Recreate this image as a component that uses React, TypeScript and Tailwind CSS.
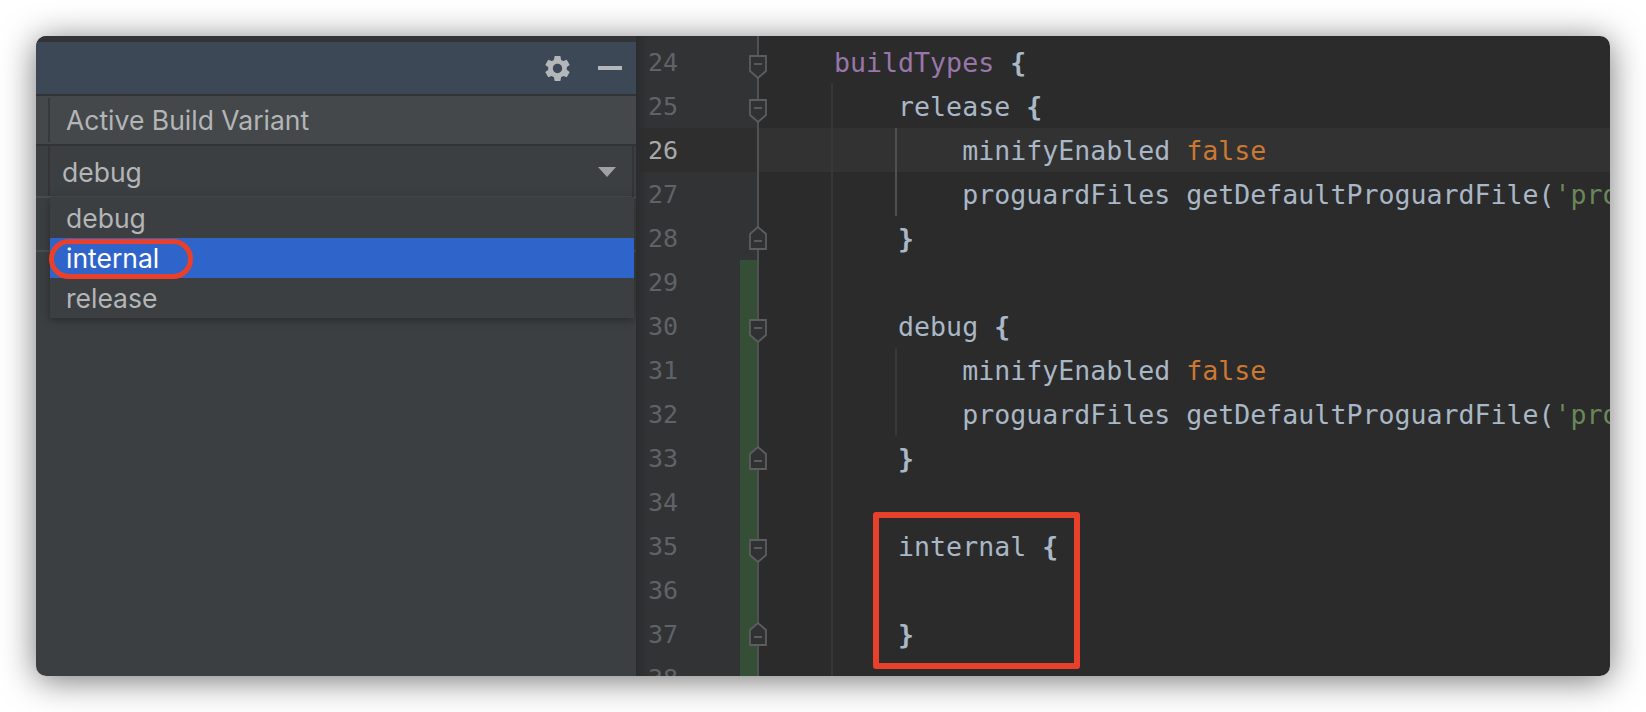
import { MdSettings } from "react-icons/md"

type Tok = { t: string; c?: string }

const purple = "text-[#9876aa]"
const orange = "text-[#cc7832]"
const green = "text-[#6a8759]"
const brace = "font-bold"

const proguard: Tok[] = [
  { t: "            proguardFiles getDefaultProguardFile(" },
  { t: "'proguard-android.txt'", c: green },
  { t: "), 'proguard-rules.pro'" },
]

const lines: { n: number; code: Tok[]; fold?: "open" | "close" }[] = [
  { n: 24, code: [{ t: "    " }, { t: "buildTypes", c: purple }, { t: " " }, { t: "{", c: brace }], fold: "open" },
  { n: 25, code: [{ t: "        release " }, { t: "{", c: brace }], fold: "open" },
  { n: 26, code: [{ t: "            minifyEnabled " }, { t: "false", c: orange }] },
  { n: 27, code: proguard },
  { n: 28, code: [{ t: "        " }, { t: "}", c: brace }], fold: "close" },
  { n: 29, code: [] },
  { n: 30, code: [{ t: "        debug " }, { t: "{", c: brace }], fold: "open" },
  { n: 31, code: [{ t: "            minifyEnabled " }, { t: "false", c: orange }] },
  { n: 32, code: proguard },
  { n: 33, code: [{ t: "        " }, { t: "}", c: brace }], fold: "close" },
  { n: 34, code: [] },
  { n: 35, code: [{ t: "        internal " }, { t: "{", c: brace }], fold: "open" },
  { n: 36, code: [] },
  { n: 37, code: [{ t: "        " }, { t: "}", c: brace }], fold: "close" },
  { n: 38, code: [] },
]

function FoldMarker({ kind }: { kind: "open" | "close" }) {
  if (kind === "open") {
    return (
      <svg className="absolute left-[113px] top-[15px] z-10" width="18" height="24" viewBox="0 0 18 24">
        <path d="M1 1H17V16L9 23L1 16Z" fill="#2f3133" stroke="#5c5d5e" strokeWidth="1.8" />
        <path d="M5 9H13" stroke="#666768" strokeWidth="1.6" />
      </svg>
    )
  }
  return (
    <svg className="absolute left-[113px] top-[10px] z-10" width="18" height="24" viewBox="0 0 18 24">
      <path d="M1 23H17V8L9 1L1 8Z" fill="#2f3133" stroke="#5c5d5e" strokeWidth="1.8" />
      <path d="M5 15H13" stroke="#666768" strokeWidth="1.6" />
    </svg>
  )
}

function CodeRow({ n, code, fold }: { n: number; code: Tok[]; fold?: "open" | "close" }) {
  const current = n === 26
  return (
    <div className={`relative flex h-[44px] shrink-0 ${current ? "bg-[#323232]" : ""}`}>
      <div
        className={`w-[104px] shrink-0 pl-[12px] pt-[1px] text-[25px] leading-[44px] ${
          current ? "bg-[#2f2e2e] text-[#a9a9a9]" : "bg-[#313335] text-[#606366]"
        }`}
      >
        {n}
      </div>
      <div className={`w-[18px] shrink-0 ${n >= 29 ? "bg-[#344f36]" : current ? "bg-[#2f2e2e]" : "bg-[#313335]"}`} />
      <div className="min-w-0 flex-1 overflow-hidden whitespace-pre pl-[12px] pt-[1px] text-[26.6px] leading-[44px] text-[#a9b7c6]">
        {code.map((tok, i) => (
          <span key={i} className={tok.c}>
            {tok.t}
          </span>
        ))}
      </div>
      {fold && <FoldMarker kind={fold} />}
    </div>
  )
}

export default function App() {
  return (
    <div className="h-[712px] w-[1646px] overflow-hidden bg-white pl-[36px] pt-[36px]">
      <div className="relative flex h-[640px] w-[1574px] overflow-hidden rounded-[10px] shadow-[0_4px_34px_rgba(0,0,0,0.55)]">
        {/* build variants panel */}
        <div className="relative flex w-[600px] shrink-0 flex-col bg-[#3c3f41] font-['Inter',sans-serif]">
          <div className="h-[6px] shrink-0 bg-[#323436]" />
          <div className="flex h-[52px] shrink-0 items-center justify-end bg-[#3c4855] pr-[14px]">
            <MdSettings className="mr-[25px] text-[#b4b7ba]" size={31} />
            <div className="h-[4px] w-[24px] bg-[#b4b7ba]" />
          </div>
          <div className="h-[2px] shrink-0 bg-[#323335]" />
          <div className="flex h-[48px] shrink-0 items-center bg-[#45484a] pl-[12px]">
            <div className="flex h-[44px] items-center border-l-2 border-[#36383a] pl-[16px] pt-[2px] text-[26.5px] text-[#b3b5b7]">
              Active Build Variant
            </div>
          </div>
          <div className="h-[2px] shrink-0 bg-[#323335]" />
          <div className="flex h-[52px] shrink-0 items-center border-b-2 border-[#4a4d4f] pl-[12px]">
            <div className="h-full border-l-2 border-[#323436]" />
          </div>
          <div className="h-[54px] shrink-0 border-b-2 border-[#4a4d4f]" />

          {/* select value sits over the first table row */}
          <div className="absolute left-[14px] top-[110px] flex h-[51px] w-[584px] items-center justify-between border-r-2 border-[#323436] pl-[12px] pr-[16px] text-[26.5px] text-[#b3b5b7]">
            <span className="pt-[3px]">debug</span>
            <div className="mt-[1px] h-0 w-0 border-x-[9px] border-t-[10px] border-x-transparent border-t-[#9fa1a3]" />
          </div>

          <div className="absolute left-[14px] top-[161px] flex w-[584px] flex-col bg-[#3c3f41] text-[26.5px] text-[#b3b5b7] shadow-[0_2px_8px_rgba(0,0,0,0.35)]">
            <div className="flex h-[41px] items-center pl-[16px] pt-[2px]">debug</div>
            <div className="flex h-[40px] items-center bg-[#2f65ca] pl-[16px] pt-[2px] text-white">internal</div>
            <div className="flex h-[40px] items-center pl-[16px] pt-[2px]">release</div>
          </div>

          {/* annotation */}
          <div className="absolute left-[13px] top-[203px] h-[40px] w-[144px] rounded-[20px] border-[5px] border-[#e8402a]" />
        </div>

        {/* editor */}
        <div className="relative flex min-w-0 flex-1 flex-col overflow-hidden bg-[#2b2b2b] font-['DejaVu_Sans_Mono',monospace]">
          <div className="absolute bottom-0 left-0 top-0 w-[122px] bg-[#313335]" />
          <div className="relative flex flex-col pt-[4px]">
            {lines.map((l) => (
              <CodeRow key={l.n} {...l} />
            ))}
          </div>
          <div className="absolute bottom-0 left-0 top-0 w-[12px] bg-gradient-to-r from-[#2b2c2e] to-transparent" />
          <div className="absolute bottom-0 left-[121px] top-0 w-[2px] bg-[#505152]" />
          <div className="absolute bottom-0 left-[195px] top-[47px] w-[2px] bg-[#373737]" />
          <div className="absolute left-[259px] top-[92px] h-[88px] w-[2px] bg-[#505050]" />
          <div className="absolute left-[259px] top-[312px] h-[88px] w-[2px] bg-[#383838]" />

          {/* annotation */}
          <div className="absolute left-[237px] top-[476px] h-[157px] w-[207px] rounded-[3px] border-[6px] border-[#e8402a]" />
        </div>
      </div>
    </div>
  )
}
